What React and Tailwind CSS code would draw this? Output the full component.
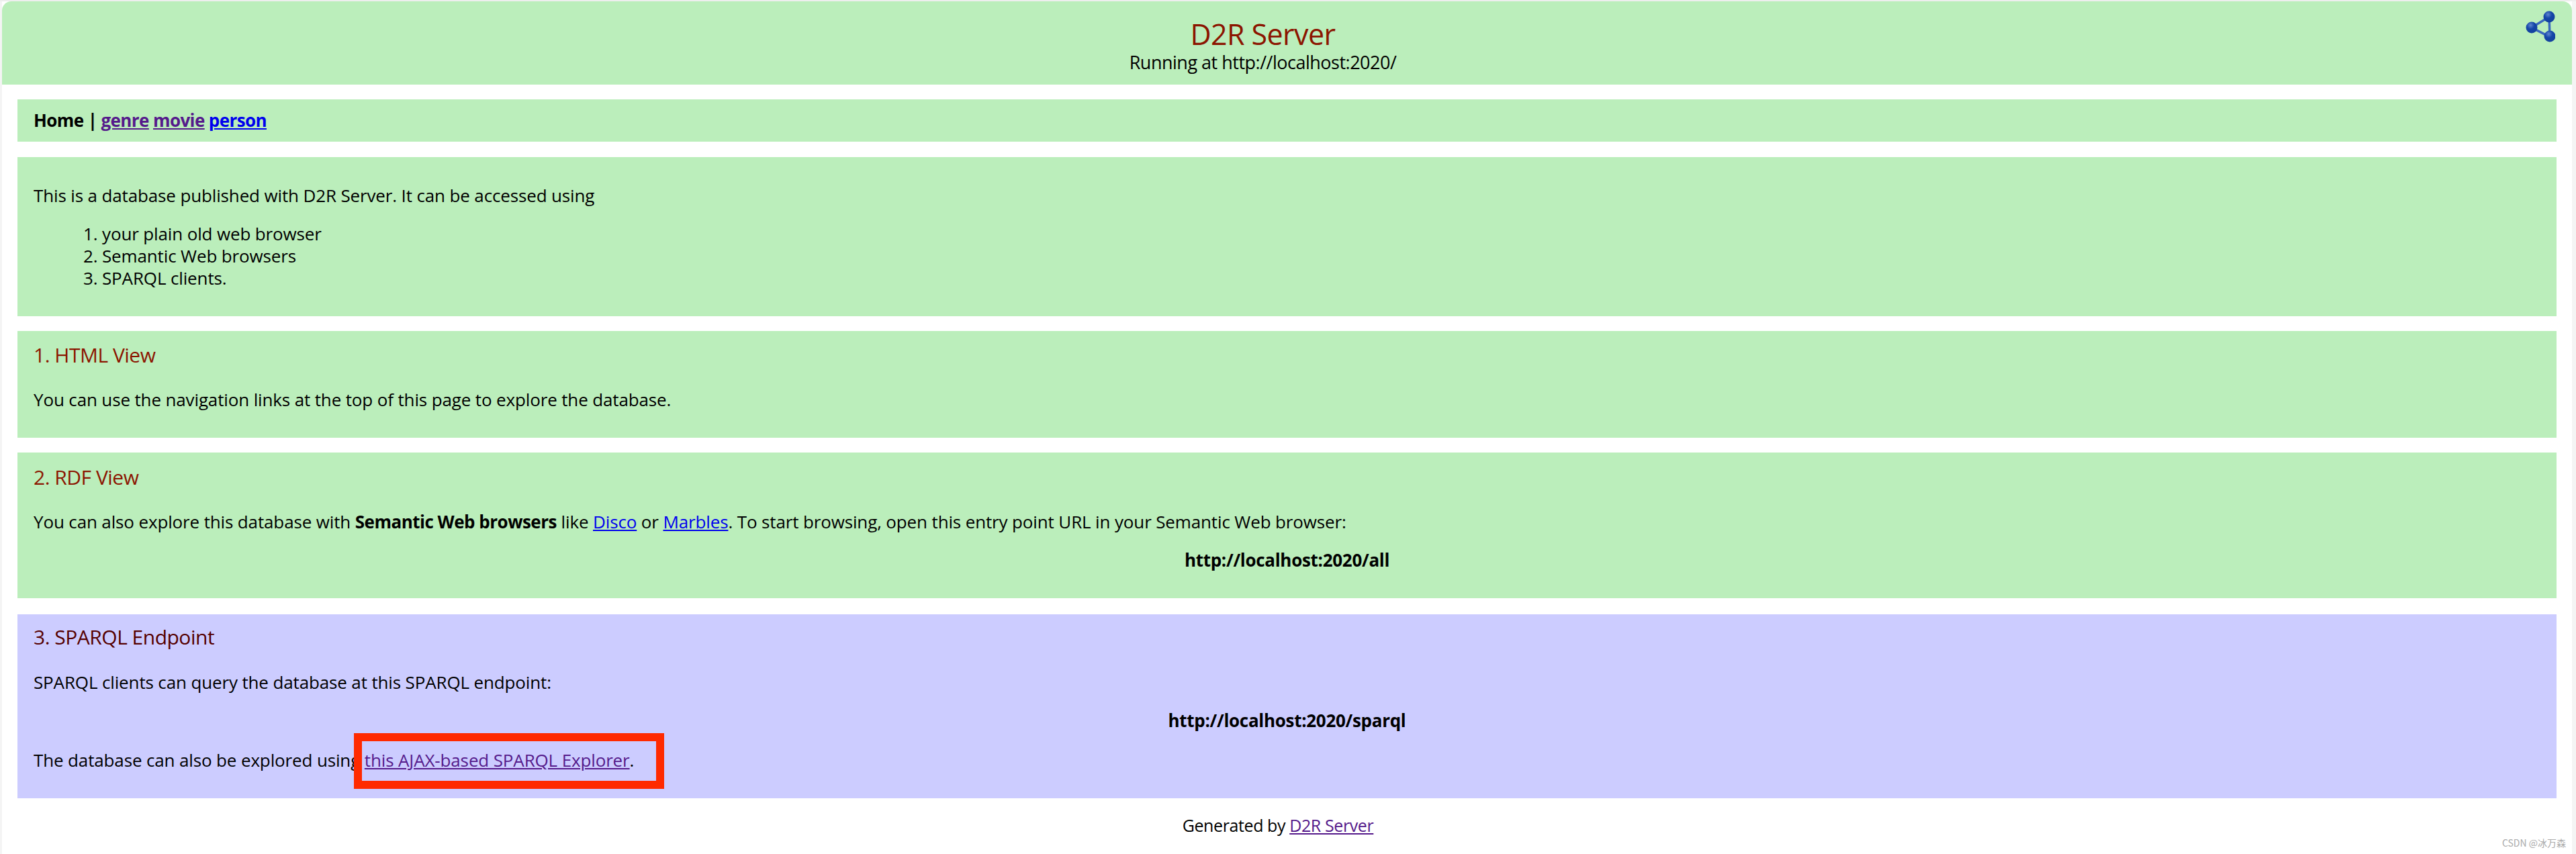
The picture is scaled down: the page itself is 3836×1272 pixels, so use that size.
import React from 'react';

const font = { fontFamily: '"Open Sans", sans-serif' };

const Box = ({ className = 'bg-[#bbeebb]', children }) => (
  <div className={`mx-[23px] px-[24px] ${className}`}>{children}</div>
);

const NetworkIcon = () => (
  <svg viewBox="0 0 44 48" className="absolute right-[25px] top-[14px] w-[44px] h-[48px]">
    <defs>
      <radialGradient id="ball" cx="0.4" cy="0.3" r="0.75">
        <stop offset="0" stopColor="#5f86cf" />
        <stop offset="0.45" stopColor="#1546a8" />
        <stop offset="1" stopColor="#123f9c" />
      </radialGradient>
    </defs>
    <g stroke="#3a68bd" strokeWidth="3.5" fill="none">
      <path d="M9 25 L35 9 L36 39 Z" />
    </g>
    <circle cx="9" cy="25" r="8.5" fill="url(#ball)" />
    <circle cx="35" cy="9" r="8.5" fill="url(#ball)" />
    <circle cx="36" cy="38" r="8.5" fill="url(#ball)" />
  </svg>
);

export default function App() {
  return (
    <div className="relative h-[1272px] w-[3836px] overflow-hidden bg-white text-black text-[26px] leading-[33px] tracking-[-0.14px] font-normal" style={font}>
      <div className="relative ml-[3px] mr-[6px] mt-[2px] h-[124px] rounded-t-[14px] bg-[#bbeebb] pt-[22px] pr-[72px] text-center">
        <div className="text-[43px] leading-[54px] text-[#8b1500] tracking-[-0.6px]">D2R Server</div>
        <div className="text-[27px] leading-[30px] tracking-[-0.5px]">Running at http://localhost:2020/</div>
        <NetworkIcon />
      </div>

      <div className="mt-[22px] ml-[3px] mr-[6px] flex flex-col">
        <Box>
          <div className="flex h-[63px] items-center font-bold tracking-[-0.6px]">
            <span>Home |&nbsp;</span>
            <a href="#genre" className="text-[#551a8b] underline">genre</a>
            <span>&nbsp;</span>
            <a href="#movie" className="text-[#551a8b] underline">movie</a>
            <span>&nbsp;</span>
            <a href="#person" className="text-[#0000ee] underline">person</a>
          </div>
        </Box>

        <div className="mt-[23px]">
          <Box>
            <div className="h-[237px] pt-[41px]">
              <p>This is a database published with D2R Server. It can be accessed using</p>
              <ol className="mt-[24px] ml-[102px] list-decimal">
                <li>your plain old web browser</li>
                <li>Semantic Web browsers</li>
                <li>SPARQL clients.</li>
              </ol>
            </div>
          </Box>
        </div>

        <div className="mt-[22px]">
          <Box>
            <div className="h-[159px] pt-[17px]">
              <h2 className="text-[30px] leading-[38px] tracking-[-0.5px] text-[#8b1500]">1. HTML View</h2>
              <p className="mt-[31px]">You can use the navigation links at the top of this page to explore the database.</p>
            </div>
          </Box>
        </div>

        <div className="mt-[22px]">
          <Box>
            <div className="h-[217px] pt-[18px]">
              <h2 className="text-[30px] leading-[38px] tracking-[-0.5px] text-[#8b1500]">2. RDF View</h2>
              <p className="mt-[31px]">
                You can also explore this database with <b className="tracking-[-0.5px]">Semantic Web browsers</b> like{' '}
                <a href="#disco" className="text-[#0000ee] underline">Disco</a> or{' '}
                <a href="#marbles" className="text-[#0000ee] underline">Marbles</a>. To start browsing, open this entry point URL in your Semantic Web browser:
              </p>
              <p className="mt-[24px] text-center font-bold tracking-[-0.3px]">http://localhost:2020/all</p>
            </div>
          </Box>
        </div>

        <div className="mt-[24px]">
          <Box className="relative bg-[#ccccff]">
            <div className="h-[274px] pt-[15px]">
              <h2 className="text-[30px] leading-[38px] tracking-[-0.5px] text-[#550000]">3. SPARQL Endpoint</h2>
              <p className="mt-[32px]">SPARQL clients can query the database at this SPARQL endpoint:</p>
              <p className="mt-[24px] text-center font-bold tracking-[-0.3px]">http://localhost:2020/sparql</p>
              <p className="mt-[26px]">
                The database can also be explored using{' '}
                <a href="#snorql" className="text-[#551a8b] underline">this AJAX-based SPARQL Explorer</a>.
              </p>
            </div>
            <div className="absolute left-[501px] top-[177px] h-[83px] w-[462px] border-[12px] border-[#ff2a00]" />
          </Box>
        </div>
      </div>

      <div className="mt-[24px] pr-[30px] text-center text-[25px] tracking-[-0.4px]">
        Generated by <a href="#d2r" className="text-[#551a8b] underline">D2R Server</a>
      </div>
      <div className="absolute right-[15px] bottom-[7px] text-[14px] leading-[20px] tracking-normal text-[#aaaaaa]" style={{ fontFamily: '"Noto Sans CJK SC", sans-serif' }}>
        CSDN @冰万森
      </div>
      <div className="absolute inset-y-0 left-0 w-[3px] bg-[#f4f4f4]" />
      <div className="absolute inset-y-0 right-0 w-[6px] bg-[#f4f4f4]" />
      <div className="absolute inset-x-0 top-0 h-[2px] bg-[#eeeeee]" />
    </div>
  );
}
